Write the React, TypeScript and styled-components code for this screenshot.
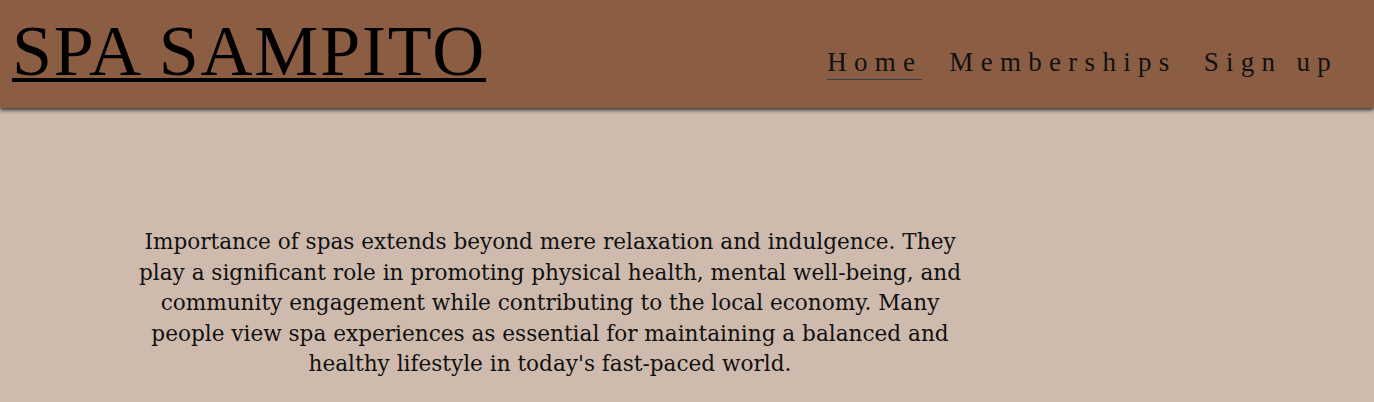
import React from "react";
import styled, { createGlobalStyle } from "styled-components";

const GlobalStyle = createGlobalStyle`
  body {
    margin: 0;
    background-color: #cfbbad;
    color: #111;
    font-family: "DejaVu Serif", "Liberation Serif", serif;
  }
`;

const Header = styled.header`
  display: flex;
  justify-content: space-between;
  align-items: center;
  height: 108px;
  padding: 0 36px 0 12px;
  background-color: #8b5e44;
  box-shadow: 0 2px 4px rgba(20, 20, 25, 0.85);
`;

const Logo = styled.a`
  font-family: "Liberation Serif", serif;
  font-size: 72px;
  letter-spacing: 1.8px;
  color: #000;
  text-decoration: underline;
  text-decoration-thickness: 4px;
  text-underline-offset: 3px;
  margin-top: -6px;
`;

const Nav = styled.nav`
  display: flex;
  gap: 27px;
  margin-top: 18px;
`;

const NavLink = styled.a<{ $active?: boolean }>`
  font-family: "Liberation Serif", serif;
  font-size: 27px;
  letter-spacing: 7.3px;
  color: #111;
  text-decoration: none;
  padding-bottom: 1px;
  border-bottom: 1px solid ${(p) => (p.$active ? "#3a3f45" : "transparent")};
`;

const Main = styled.main`
  display: flex;
  padding-top: 119px;
`;

const TextColumn = styled.section`
  width: 1100px;
  display: flex;
  justify-content: center;
`;

const Intro = styled.p`
  margin: 0;
  max-width: 836px;
  text-align: center;
  font-size: 21.6px;
  line-height: 30.5px;
  color: #111;
`;

const App = () => {
  return (
    <>
      <GlobalStyle />
      <Header>
        <Logo>SPA SAMPITO</Logo>
        <Nav>
          <NavLink $active>Home</NavLink>
          <NavLink>Memberships</NavLink>
          <NavLink>Sign up</NavLink>
        </Nav>
      </Header>
      <Main>
        <TextColumn>
          <Intro>
            Importance of spas extends beyond mere relaxation and indulgence.
            They play a significant role in promoting physical health, mental
            well-being, and community engagement while contributing to the
            local economy. Many people view spa experiences as essential for
            maintaining a balanced and healthy lifestyle in today's fast-paced
            world.
          </Intro>
        </TextColumn>
      </Main>
    </>
  );
};

export default App;
